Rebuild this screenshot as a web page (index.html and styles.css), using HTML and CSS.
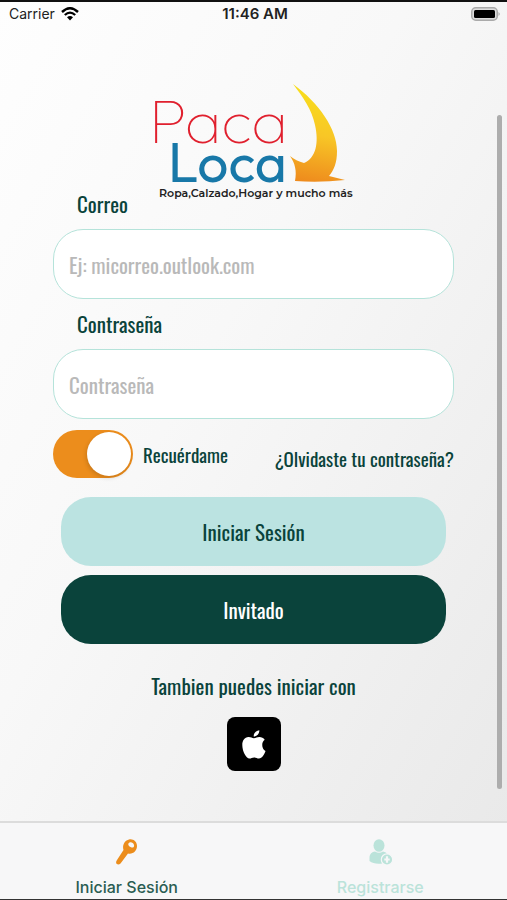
FILE: index.html
```html
<!DOCTYPE html>
<html lang="es">
<head>
  <meta charset="utf-8">
  <meta name="viewport" content="width=device-width, initial-scale=1">
  <title>Paca Loca</title>
  <link rel="stylesheet" href="styles.css">
</head>
<body>
  <header class="status">
    <div class="status-left">
      <span>Carrier</span>
      <svg class="wifi" viewBox="0 0 18 14" aria-hidden="true">
        <path d="M1 5Q9 -2.500 17 5" fill="none" stroke="#000" stroke-width="2.400"/>
        <path d="M3.800 8Q9 3.200 14.200 8" fill="none" stroke="#000" stroke-width="2.300"/>
        <path d="M6 10.300Q9 7.700 12 10.300L9 13.500Z" fill="#000"/>
      </svg>
    </div>
    <time class="clock">11:46 AM</time>
    <svg class="battery" viewBox="0 0 30 14" aria-hidden="true">
      <rect x="0.750" y="0.750" width="25.500" height="12.500" rx="4" fill="#ddd" stroke="#aaa" stroke-width="1.500"/>
      <rect x="3" y="3" width="21" height="8" rx="1.500" fill="#000"/>
      <path d="M27.500 5Q30 7 27.500 9Z" fill="#aaa"/>
    </svg>
  </header>

  <main class="content">
    <svg class="logo" viewBox="0 0 200 120" role="img" aria-label="Paca Loca">
      <defs>
        <linearGradient id="arrow" x1="0.300" y1="0" x2="0.200" y2="1">
          <stop offset="0" stop-color="#f8e01c"/>
          <stop offset="0.500" stop-color="#f8c626"/>
          <stop offset="1" stop-color="#ee8a1d"/>
        </linearGradient>
      </defs>
      <text class="logo-paca" x="-5" y="60">Paca</text>
      <text class="logo-loca" x="14" y="99">Loca</text>
      <path d="M139 1C165 20 183 46 183 68C183 80 180 87 175 93Q183 95 191 97Q165 100 141 98C143 88 141 80 136 73Q142 78 150 80C162 75 165 60 161 42C158 27 149 14 139 1Z" fill="url(#arrow)"/>
      <text class="logo-tag" x="5" y="114">Ropa,Calzado,Hogar y mucho más</text>
    </svg>

    <form class="form">
      <label class="label" for="correo">Correo</label>
      <input class="field" id="correo" type="email" placeholder="Ej: micorreo.outlook.com">
      <label class="label" for="clave">Contraseña</label>
      <input class="field" id="clave" type="password" placeholder="Contraseña">

      <div class="options">
        <div class="remember">
          <input class="switch" id="recordar" type="checkbox" checked>
          <label for="recordar">Recuérdame</label>
        </div>
        <a class="forgot" href="#">¿Olvidaste tu contraseña?</a>
      </div>

      <div class="actions">
        <button class="btn btn-login" type="button">Iniciar Sesión</button>
        <button class="btn btn-guest" type="button">Invitado</button>
      </div>
    </form>

    <p class="alt">Tambien puedes iniciar con</p>
    <button class="apple" type="button" aria-label="Apple">
      <svg viewBox="0 0 24 29" aria-hidden="true">
        <path d="M12 8.200C10 8.200 8.700 6.900 6.500 7C2.500 7.200 0.300 10.500 0.300 15C0.300 21 4 28.500 7.500 28.500C9.200 28.500 10 27.400 12.200 27.400C14.400 27.400 15 28.500 17 28.500C20 28.500 22.500 24 23.500 21C19.300 18.500 19.300 12 22.700 9.800C21.500 8 19.500 7 17.400 7C15.200 7 13.800 8.200 12 8.200Z" fill="#fff"/>
        <path d="M11.700 6.400C11.500 3.200 14.200 0.500 17.300 0.200C17.600 3.500 14.900 6.400 11.700 6.400Z" fill="#fff"/>
      </svg>
    </button>
    <div class="scroll-thumb"></div>
  </main>

  <nav class="tabs">
    <a class="tab tab-active" href="#">
      <svg viewBox="0 0 26 26" aria-hidden="true">
        <path fill-rule="evenodd" d="M15 0.500C19 -0.500 23 2.500 23 7C23 12 19 15.500 14 14.500L6.500 24.500Q4.500 26.500 2.500 24.800Q1.500 23 3 21L9.500 11C8 6.500 10.500 1.500 15 0.500ZM15.500 3.500C13.500 4.500 14 6.500 16.500 8C19 9.500 20.500 8 20 6C19.500 4 17.500 2.800 15.500 3.500Z" fill="currentColor"/>
      </svg>
      <span>Iniciar Sesión</span>
    </a>
    <a class="tab" href="#">
      <svg viewBox="0 0 26 26" aria-hidden="true">
        <ellipse cx="12" cy="6.500" rx="5.500" ry="6.300" fill="currentColor"/>
        <path d="M2.500 22V19C2.500 15 5 12.800 8 12.500Q12 15 16 12.500Q18.500 13 20 14.500L15 24.500Q7 25.500 2.500 22Z" fill="currentColor"/>
        <circle cx="20" cy="20.500" r="5.700" fill="currentColor" stroke="#f7f7f8" stroke-width="1.200"/>
        <path d="M20 17.300V23.700M17.300 20.500H22.700" stroke="#f7f7f8" stroke-width="2.200"/>
      </svg>
      <span>Registrarse</span>
    </a>
  </nav>
</body>
</html>
```
FILE: styles.css
```css
* {
  box-sizing: border-box;
}

body {
  margin: 0;
  min-height: 100vh;
  display: flex;
  flex-direction: column;
  border-top: 2px solid #111;
  border-bottom: 1px solid #333;
  background: linear-gradient(120deg, #fefefe 0%, #f8f8f8 40%, #e8e8e8 100%);
  color: #0a433b;
  font-family: "Oswald", "Liberation Sans Narrow", "Liberation Sans", sans-serif;
  font-size: 21px;
  line-height: 28px;
}

a {
  color: inherit;
  text-decoration: none;
}

button,
input {
  font: inherit;
}

.status {
  display: grid;
  grid-template-columns: 1fr auto 1fr;
  align-items: center;
  height: 24px;
  padding: 0 6px 0 9px;
  color: #222;
  font-family: Inter, sans-serif;
  font-size: 14px;
  line-height: 24px;
}

.status-left {
  display: flex;
  align-items: center;
  gap: 6px;
}

.wifi {
  width: 18px;
  height: 14px;
}

.clock {
  font-size: 15px;
  font-weight: 600;
}

.battery {
  width: 30px;
  height: 14px;
  justify-self: end;
}

.content {
  position: relative;
  flex: 1;
  display: flex;
  flex-direction: column;
  align-items: center;
  padding-top: 57px;
}

.logo {
  width: 200px;
  height: 120px;
  margin-bottom: -13px;
  overflow: visible;
}

.logo-paca {
  font: 100 62px Outfit, Jost, Urbanist, Quicksand, Comfortaa, Montserrat, Lato, sans-serif;
  fill: #e0202e;
}

.logo-loca {
  font: 400 55px Outfit, Jost, Urbanist, Quicksand, Comfortaa, Montserrat, Lato, sans-serif;
  fill: #1878a8;
}

.logo-tag {
  font: 600 11px Montserrat, "Open Sans", sans-serif;
  fill: #222;
}

.form {
  display: flex;
  flex-direction: column;
  align-self: stretch;
  padding: 0 53px;
}

.label {
  padding-left: 24px;
}

.field {
  width: 100%;
  height: 70px;
  margin: 11px 0;
  padding: 0 15px;
  border: 1px solid #b5e3da;
  border-radius: 30px;
  background: #fff;
  color: #0a433b;
}

.field::placeholder {
  color: #b9b9b9;
  opacity: 1;
}

.options {
  display: flex;
  justify-content: space-between;
  align-items: center;
  font-size: 19px;
}

.remember {
  display: flex;
  align-items: center;
  gap: 10px;
}

.switch {
  appearance: none;
  display: flex;
  width: 80px;
  height: 48px;
  margin: 0;
  padding: 2px;
  border-radius: 24px;
  background: #ccc;
}

.switch::before {
  content: "";
  width: 44px;
  height: 44px;
  border-radius: 50%;
  background: #fff;
  box-shadow: -1px 2px 4px rgba(0, 0, 0, 0.15);
}

.switch:checked {
  justify-content: flex-end;
  background: #ec8d1c;
}

.forgot {
  padding-top: 8px;
}

.actions {
  display: flex;
  flex-direction: column;
  gap: 9px;
  padding: 19px 8px 0;
}

.btn {
  height: 69px;
  padding: 0;
  border: 0;
  border-radius: 30px;
}

.btn-login {
  background: #bbe3e1;
  color: #0a433b;
}

.btn-guest {
  background: #0a433b;
  color: #fff;
}

.alt {
  margin: 28px 0 17px;
}

.apple {
  display: flex;
  align-items: center;
  justify-content: center;
  width: 54px;
  height: 54px;
  padding: 0;
  border: 0;
  border-radius: 8px;
  background: #000;
}

.apple svg {
  width: 24px;
  height: 29px;
}

.scroll-thumb {
  position: absolute;
  top: 89px;
  right: 5px;
  bottom: 32px;
  width: 5px;
  border-radius: 3px;
  background: #adadad;
}

.tabs {
  display: flex;
  height: 78px;
  border-top: 2px solid #dcdcdc;
  background: #f7f7f8;
  font-family: Inter, sans-serif;
  font-size: 16px;
  font-weight: 500;
  line-height: 20px;
}

.tab {
  flex: 1;
  display: flex;
  flex-direction: column;
  align-items: center;
  gap: 12px;
  padding-top: 16px;
  color: #bbe3da;
}

.tab svg {
  width: 26px;
  height: 26px;
}

.tab-active {
  color: #ec8d1c;
}

.tab-active span {
  color: #2a5d52;
}
```
